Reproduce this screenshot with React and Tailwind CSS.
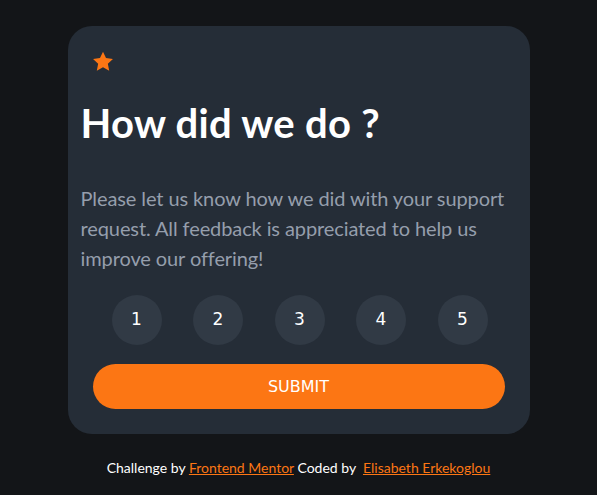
import React from 'react';

const ratings = [1, 2, 3, 4, 5];

function Star() {
    return (
        <svg width="22" height="21" viewBox="0 0 24 23" className="block">
            <path d="M12 0.8l3.3 7 7.6 0.9-5.6 5.2 1.5 7.6L12 17.7l-6.8 3.8 1.5-7.6L1.1 8.7l7.6-0.9z" fill="#fc7614" />
        </svg>
    )
}

export default function App() {
    return (
        <div className="min-h-[495px] w-full bg-[#131518] flex flex-col items-center pt-[26px]" style={{fontFamily: 'Lato, "Noto Sans", sans-serif'}}>
            <div className="w-[462px] h-[408px] bg-[#252d37] rounded-[24px] pl-[13px] pr-[25px] pt-[25px] flex flex-col">
                <div className="pl-[11px] h-[26px]">
                    <Star />
                </div>
                <h1 className="mt-[22px] text-[40px] leading-[48px] font-bold text-white tracking-[0.3px]">
                    How did we do ?
                </h1>
                <p className="mt-[36px] -mr-[14px] text-[20px] leading-[30px] text-[#959eac] tracking-[-0.1px]">
                    Please let us know how we did with your support request. All feedback is appreciated to help us improve our offering!
                </p>
                <div className="mt-[22px] flex justify-between pl-[31px] pr-[17px]">
                    {ratings.map(r => (
                        <button key={r} className="w-[50px] h-[50px] rounded-full bg-[#313a45] text-white text-[17px] flex items-center justify-center" style={{fontFamily: '"DejaVu Sans", Verdana, sans-serif'}}>
                            {r}
                        </button>
                    ))}
                </div>
                <button className="mt-[19px] ml-[12px] w-[412px] h-[45px] rounded-full bg-[#fc7614] text-white text-[16px]" style={{fontFamily: '"DejaVu Sans", Verdana, sans-serif'}}>
                    SUBMIT
                </button>
            </div>
            <div className="mt-[23px] text-[14px] text-white">
                Challenge by <a href="#" className="text-[#fc7614] underline">Frontend Mentor</a> Coded by&nbsp; <a href="#" className="text-[#fc7614] underline">Elisabeth Erkekoglou</a>
            </div>
        </div>
    )
}
